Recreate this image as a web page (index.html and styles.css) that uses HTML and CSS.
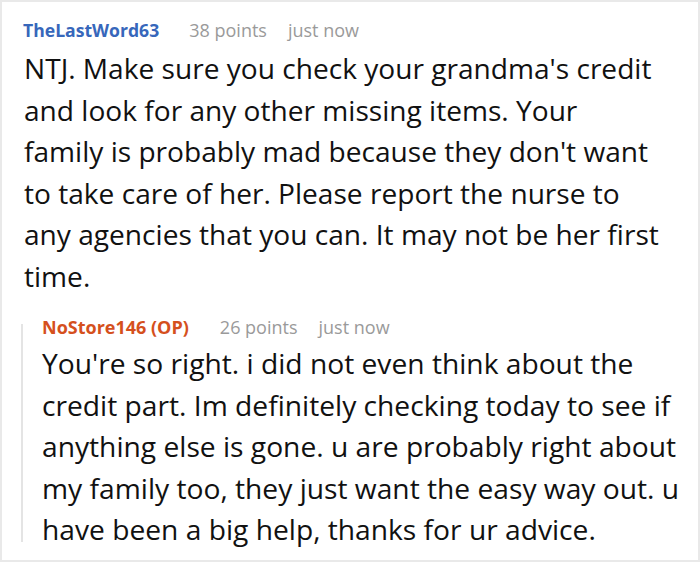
FILE: index.html
```html
<!DOCTYPE html>
<html>
<head>
<meta charset="utf-8">
<link rel="stylesheet" href="styles.css">
</head>
<body>
<div class="frame">
  <div class="comment">
    <div class="meta top">
      <span class="user">TheLastWord63</span>
      <span class="info">38 points</span>
      <span class="info">just now</span>
    </div>
    <p class="text main">NTJ. Make sure you check your grandma's credit<br>and look for any other missing items. Your<br>family is probably mad because they don't want<br>to take care of her. Please report the nurse to<br>any agencies that you can. It may not be her first<br>time.</p>
    <div class="reply">
      <div class="meta">
        <span class="user op">NoStore146 (OP)</span>
        <span class="info">26 points</span>
        <span class="info">just now</span>
      </div>
      <p class="text rtext">You're so right. i did not even think about the credit part. Im definitely checking today to see if anything else is gone. u are probably right about my family too, they just want the easy way out. u have been a big help, thanks for ur advice.</p>
    </div>
  </div>
</div>
</body>
</html>
```
FILE: styles.css
```css
html, body {
  margin: 0;
  padding: 0;
  background: #fff;
}
.frame {
  width: 700px;
  height: 562px;
  box-sizing: border-box;
  border: 2px solid #e9e9e9;
  font-family: "Open Sans", "Noto Sans", sans-serif;
  color: #111;
  overflow: hidden;
}
.comment {
  padding: 16px 0 0 22px;
}
.meta {
  display: flex;
  font-size: 18px;
  line-height: 24px;
}
.meta.top {
  margin-left: -1px;
}
.meta.top .user {
  font-size: 17.6px;
  margin-right: 30px;
}
.user {
  font-weight: 700;
  color: #3767bb;
  margin-right: 31px;
}
.user.op {
  color: #d5501d;
}
.info {
  color: #9a9a9a;
  margin-right: 21px;
}
.text {
  margin: 6px 0 0 0;
  font-size: 28px;
  line-height: 41.5px;
}
.main {
  font-size: 28.1px;
  white-space: nowrap;
}
.reply {
  position: relative;
  margin-top: 18px;
  margin-left: -3px;
  padding-left: 21px;
}
.reply::before {
  content: "";
  position: absolute;
  left: 0;
  top: 9px;
  bottom: 9px;
  width: 2px;
  background: #e4e4e4;
}
.rtext {
  margin-top: 4px;
  font-size: 28.2px;
  padding-right: 8px;
}
```
